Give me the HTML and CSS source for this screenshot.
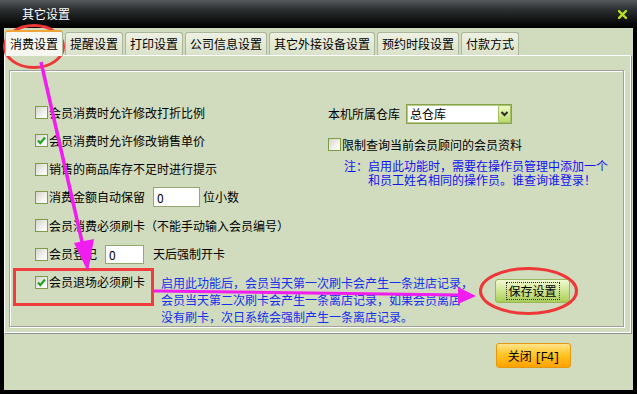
FILE: index.html
```html
<!DOCTYPE html>
<html lang="zh-CN">
<head>
    <meta charset="UTF-8">
    <title>其它设置</title>
    <link rel="stylesheet" href="styles.css">
</head>
<body>
    <div id="win">
        <div class="title">
            <span>其它设置</span>
            <svg class="xbtn" width="9" height="9" viewBox="0 0 9 9"><path d="M1 1L8 8M8 1L1 8" stroke="#b6e21e" stroke-width="2.4" stroke-linecap="square"/></svg>
        </div>
        <div class="client">
            <div class="tabs">
                <a class="tab active">消费设置</a>
                <a class="tab">提醒设置</a>
                <a class="tab">打印设置</a>
                <a class="tab">公司信息设置</a>
                <a class="tab">其它外接设备设置</a>
                <a class="tab">预约时段设置</a>
                <a class="tab">付款方式</a>
            </div>
            <div class="panel">
                <div class="group">
                    <div class="cols">
                        <div class="left">
                            <label class="row"><i class="cb"></i>会员消费时允许修改打折比例</label>
                            <label class="row"><i class="cb"><svg width="11" height="11" viewBox="0 0 11 11"><path d="M2 5.5L4.3 8L9 2.5" fill="none" stroke="#22a222" stroke-width="2.2"/></svg></i>会员消费时允许修改销售单价</label>
                            <label class="row"><i class="cb"></i>销售的商品库存不足时进行提示</label>
                            <label class="row"><i class="cb"></i>消费金额自动保留<input class="num w47" value="0">位小数</label>
                            <label class="row"><i class="cb"></i>会员消费必须刷卡（不能手动输入会员编号）</label>
                            <label class="row"><i class="cb"></i>会员登记<input class="num w39" value="0">天后强制开卡</label>
                        </div>
                        <div class="right">
                            <div class="row">本机所属仓库<span class="select">总仓库<b class="drop"><svg width="11" height="16" viewBox="0 0 11 16"><path d="M2.5 6L5.5 9L8.5 6" fill="none" stroke="#2b2b2b" stroke-width="2"/></svg></b></span></div>
                            <label class="row r2"><i class="cb"></i>限制查询当前会员顾问的会员资料</label>
                            <div class="note">
                                <div>注：启用此功能时，需要在操作员管理中添加一个</div>
                                <div class="indent">和员工姓名相同的操作员。谁查询谁登录！</div>
                            </div>
                        </div>
                    </div>
                    <div class="bottom">
                        <label class="row"><i class="cb"><svg width="11" height="11" viewBox="0 0 11 11"><path d="M2 5.5L4.3 8L9 2.5" fill="none" stroke="#22a222" stroke-width="2.2"/></svg></i>会员退场必须刷卡</label>
                        <p class="tip">启用此功能后，会员当天第一次刷卡会产生一条进店记录，<br>会员当天第二次刷卡会产生一条离店记录，如果会员离店<br>没有刷卡，次日系统会强制产生一条离店记录。</p>
                        <button class="save"><span>保存设置</span></button>
                    </div>
                </div>
            </div>
            <div class="foot">
                <button class="close">关闭 <span class="key">[F4]</span></button>
            </div>
        </div>
        <!-- 标注 -->
        <svg class="marks" width="637" height="394" viewBox="0 0 637 394">
            <ellipse cx="34" cy="46.5" rx="29.5" ry="21" fill="none" stroke="#ee3838" stroke-width="3"/>
            <rect x="14.5" y="269.5" width="138" height="35" fill="none" stroke="#f03c3c" stroke-width="3"/>
            <ellipse cx="528.5" cy="291" rx="48" ry="22.5" fill="none" stroke="#ee3838" stroke-width="3"/>
            <path d="M41 62L83 246" stroke="#f01cf0" stroke-width="3.5"/>
            <polygon points="74,243 94,239 88,272" fill="#f01cf0"/>
            <path d="M154 291L460 295" stroke="#f01cf0" stroke-width="3"/>
            <polygon points="458,287 476,296 458,304" fill="#f01cf0"/>
        </svg>
    </div>
</body>
</html>
```

FILE: styles.css
```css
* {
    margin: 0;
    padding: 0;
    box-sizing: border-box;
}

body {
    background: #000;
    font-family: "Noto Sans CJK SC", sans-serif;
    font-size: 12px;
    color: #000;
}

#win {
    position: relative;
    width: 637px;
    height: 394px;
    background: #000;
}

.title {
    height: 28px;
    display: flex;
    align-items: center;
    justify-content: space-between;
    padding: 0 10px 0 22px;
    color: #fff;
    line-height: 14px;
    background: linear-gradient(#55595d, #2c2f31 35%, #0b0c0c 80%, #000);
}

.xbtn {
    display: block;
}

.client {
    margin: 0 4px;
    height: 362px;
    background: #d1dcbf;
}

.tabs {
    display: flex;
    align-items: flex-end;
    gap: 2px;
    height: 27px;
    padding-left: 1px;
}

.tab {
    height: 23px;
    padding: 0 4px;
    line-height: 22px;
    border: 1px solid #aab79a;
    border-bottom: none;
    border-radius: 3px 3px 0 0;
    background: linear-gradient(#eef1e3, #dae2ca);
}

.tab.active {
    position: relative;
    z-index: 1;
    height: 26px;
    margin-bottom: -1px;
    line-height: 24px;
    border-top: 2px solid #f0a53a;
    background: #f6f7f0;
}

.panel {
    height: 279px;
    margin-right: 1px;
    padding: 14px 7px 6px 4px;
    border: 1px solid;
    border-color: #fff #929292 #929292 #fff;
    box-shadow: inset -1px -1px 0 #fff;
}

.group {
    height: 257px;
    padding: 31.5px 0 0 25px;
    border: 1px solid #a0a0a0;
    box-shadow: 1px 1px 0 #fff, inset 1px 1px 0 #fff;
}

.cols {
    display: flex;
}

.left {
    width: 293px;
    display: flex;
    flex-direction: column;
    gap: 8.333px;
}

.row {
    display: flex;
    align-items: center;
    height: 20px;
    line-height: 20px;
    white-space: nowrap;
}

.cb {
    width: 13px;
    height: 13px;
    margin-right: 1px;
    border: 1px solid #7f9b48;
    background: linear-gradient(135deg, #d5d5cb, #f2f2ee 60%, #fff);
    display: flex;
    align-items: center;
    justify-content: center;
}

.num {
    height: 20px;
    margin: 0 3px 0 8px;
    padding: 0 3px;
    border: 1px solid #93a870;
    background: #fff;
    font: 12px "Noto Sans CJK SC", sans-serif;
    line-height: 18px;
}

.w47 {
    width: 47px;
}

.w39 {
    width: 39px;
    height: 19px;
    margin-right: 9px;
}

.right {
    margin-top: 1.5px;
}

.select {
    width: 106px;
    height: 20px;
    margin-left: 6px;
    padding-left: 3px;
    display: flex;
    align-items: center;
    justify-content: space-between;
    border: 1px solid #86a34c;
    box-shadow: inset 0 0 0 1px #b7cc8a;
    background: #fff;
}

.drop {
    width: 13px;
    height: 18px;
    display: flex;
    align-items: center;
    justify-content: center;
    border: 1px solid #a4c262;
    border-radius: 2px;
    background: linear-gradient(#effac4, #b8da68);
}

.r2 {
    margin-top: 10.5px;
}

.note {
    margin-top: 4px;
    padding-left: 16px;
    line-height: 14.5px;
    color: #1212f0;
    white-space: nowrap;
}

.note .indent {
    padding-left: 24px;
}

.bottom {
    display: flex;
    align-items: flex-start;
    margin-top: 8.333px;
}

.tip {
    width: 312px;
    margin: 2px 0 0 16px;
    line-height: 17px;
    color: #1430ec;
    white-space: nowrap;
}

.save {
    width: 75px;
    height: 24px;
    margin: 6.5px 0 0 22px;
    border: 1px solid #98b75a;
    border-radius: 3px;
    background: linear-gradient(#f1f8d2, #cfe592 50%, #a9cc55);
    font: 12px "Noto Sans CJK SC", sans-serif;
    display: flex;
    align-items: center;
    justify-content: center;
}

.save span {
    padding: 0 2px;
    line-height: 16px;
    outline: 1px dotted #333;
}

.foot {
    display: flex;
    justify-content: flex-end;
    padding: 9px 62px 0 0;
}

.close {
    width: 75px;
    height: 25px;
    border: 1px solid #e39a10;
    border-radius: 3px;
    background: linear-gradient(#ffe58a, #ffc526 45%, #ffa200);
    font: 12px "Noto Sans CJK SC", sans-serif;
}

.key {
    font-family: "Liberation Mono", monospace;
    font-size: 12px;
    letter-spacing: -1px;
}

.marks {
    position: absolute;
    left: 0;
    top: 0;
    pointer-events: none;
}
```
